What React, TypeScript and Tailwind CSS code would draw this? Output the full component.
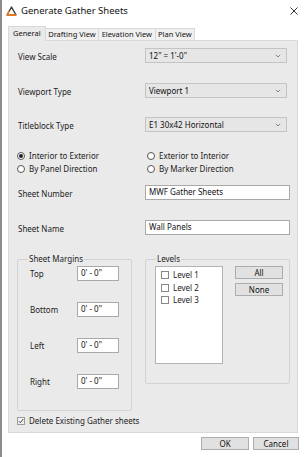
import React from "react";

const font = { fontFamily: '"Noto Sans", "Open Sans", sans-serif' };

function Chevron() {
  return (
    <svg width="6" height="4" viewBox="0 0 6 4" className="shrink-0">
      <path d="M0.8 0.8 L3 3 L5.2 0.8" fill="none" stroke="#7a7a7a" strokeWidth="0.9" />
    </svg>
  );
}

function Select({ value }: { value: string }) {
  return (
    <div className="w-[142px] h-[15px] border border-[#c4c4c4] bg-[#e6e6e6] flex items-center justify-between pl-[3px] pr-[5px] text-[8px] text-[#111]">
      <span className="leading-none">{value}</span>
      <Chevron />
    </div>
  );
}

function Input({ value, w }: { value: string; w: string }) {
  return (
    <div className={`${w} h-[15px] border border-[#a9a9a9] bg-white flex items-start pl-[3px] pt-[1px] text-[8px] leading-[10px] text-[#111]`}>
      {value}
    </div>
  );
}

function Radio({ checked, label }: { checked?: boolean; label: string }) {
  return (
    <div className="flex items-center gap-[4px] h-[13px]">
      <div className="w-[8px] h-[8px] rounded-full border border-[#555] bg-white flex items-center justify-center">
        {checked && <div className="w-[4px] h-[4px] rounded-full bg-[#222]" />}
      </div>
      <span className="text-[8px] text-[#222] leading-none">{label}</span>
    </div>
  );
}

function Btn({ label, w }: { label: string; w: string }) {
  return (
    <div className={`${w} h-[13px] border border-[#adadad] bg-[#e1e1e1] flex items-center justify-center text-[8px] text-[#111] leading-none`}>
      {label}
    </div>
  );
}

function MarginRow({ label, first }: { label: string; first?: boolean }) {
  return (
    <div className={`flex items-center h-[15px] ${first ? "" : "mt-[21px]"}`}>
      <span className="w-[50px] pl-[3px] text-[8px] text-[#222] leading-none">{label}</span>
      <Input value="0' - 0&quot;" w="w-[42px]" />
    </div>
  );
}

function LevelItem({ label }: { label: string }) {
  return (
    <div className="flex items-center gap-[4px] h-[12.5px]">
      <div className="w-[8px] h-[8px] border border-[#888] bg-white" />
      <span className="text-[8px] text-[#222] leading-none">{label}</span>
    </div>
  );
}

export default function App() {
  return (
    <div style={font} className="w-[305px] h-[457px] bg-white border-l-[2px] border-[#8c8c8c] flex flex-col overflow-hidden">
      {/* Title bar */}
      <div className="h-[20px] flex items-center pl-[4px] pr-[7px] pt-[1px]">
        <svg width="11" height="10" viewBox="0 0 11 10" className="shrink-0">
          <path d="M5.5 1 L1 9 L10 9 Z" fill="none" stroke="#3a3a3a" strokeWidth="1.4" strokeLinejoin="round" />
          <path d="M1 9 L10 9" stroke="#f07a1a" strokeWidth="1.8" />
          <path d="M1.2 8.6 L3.2 5" stroke="#f07a1a" strokeWidth="1.4" />
        </svg>
        <span className="ml-[4px] text-[9.5px] text-[#111] leading-none">Generate Gather Sheets</span>
        <div className="flex-1" />
        <svg width="8" height="8" viewBox="0 0 8 8">
          <path d="M0.5 0.5 L7.5 7.5 M7.5 0.5 L0.5 7.5" stroke="#333" strokeWidth="1" />
        </svg>
      </div>

      {/* Tabs */}
      <div className="mt-[6px] ml-[6px] flex items-end h-[14px] relative z-10">
        <div className="h-[15px] px-[4px] border border-[#d9d9d9] border-b-0 bg-[#eaeaea] flex items-center text-[7.5px] text-[#111] leading-none -mb-[1px]">
          General
        </div>
        <div className="h-[12px] px-[2.5px] border border-[#d9d9d9] border-b-0 border-l-0 bg-[#f0f0f0] flex items-center text-[7.5px] text-[#111] leading-none">
          Drafting View
        </div>
        <div className="h-[12px] px-[2.5px] border border-[#d9d9d9] border-b-0 border-l-0 bg-[#f0f0f0] flex items-center text-[7.5px] text-[#111] leading-none">
          Elevation View
        </div>
        <div className="h-[12px] px-[2.5px] border border-[#d9d9d9] border-b-0 border-l-0 bg-[#f0f0f0] flex items-center text-[7.5px] text-[#111] leading-none">
          Plan View
        </div>
      </div>

      {/* Panel */}
      <div className="ml-[6px] w-[290px] h-[393px] border border-[#d9d9d9] bg-[#eaeaea] pl-[8px] pt-[7px] flex flex-col">
        <div className="flex items-center h-[15px]">
          <span className="w-[128px] pl-[1px] pt-[2px] text-[8px] text-[#222] leading-none">View Scale</span>
          <Select value={'12" = 1\'-0"'} />
        </div>
        <div className="flex items-center h-[15px] mt-[20px]">
          <span className="w-[128px] pl-[1px] pt-[2px] text-[8px] text-[#222] leading-none">Viewport Type</span>
          <Select value="Viewport 1" />
        </div>
        <div className="flex items-center h-[15px] mt-[19px]">
          <span className="w-[128px] pl-[1px] pt-[2px] text-[8px] text-[#222] leading-none">Titleblock Type</span>
          <Select value="E1 30x42 Horizontal" />
        </div>

        <div className="mt-[17px] grid grid-cols-[130px_1fr]">
          <Radio checked label="Interior to Exterior" />
          <Radio label="Exterior to Interior" />
          <Radio label="By Panel Direction" />
          <Radio label="By Marker Direction" />
        </div>

        <div className="flex items-center h-[15px] mt-[10px]">
          <span className="w-[128px] pl-[1px] pt-[2px] text-[8px] text-[#222] leading-none">Sheet Number</span>
          <Input value="MWF Gather Sheets" w="w-[145px]" />
        </div>
        <div className="flex items-center h-[15px] mt-[20px]">
          <span className="w-[128px] pl-[1px] pt-[2px] text-[8px] text-[#222] leading-none">Sheet Name</span>
          <Input value="Wall Panels" w="w-[145px]" />
        </div>

        {/* Group boxes */}
        <div className="mt-[20px] flex items-start">
          <fieldset className="w-[115px] h-[156px] border border-[#d2d2d2] rounded-[2px] pl-[9px] pt-[3px]">
            <legend className="text-[8px] text-[#222] leading-none px-[1px] ml-[1px]">Sheet Margins</legend>
            <MarginRow label="Top" first />
            <MarginRow label="Bottom" />
            <MarginRow label="Left" />
            <MarginRow label="Right" />
          </fieldset>
          <fieldset className="ml-[13px] w-[145px] h-[129px] border border-[#d2d2d2] rounded-[2px] pl-[9px] pt-[3px] flex">
            <legend className="text-[8px] text-[#222] leading-none px-[1px] ml-[1px]">Levels</legend>
            <div className="flex items-start">
              <div className="w-[68px] h-[98px] border border-[#b4b4b4] bg-white pl-[5px] pt-[2px]">
                <LevelItem label="Level 1" />
                <LevelItem label="Level 2" />
                <LevelItem label="Level 3" />
              </div>
              <div className="ml-[12px] flex flex-col gap-[4px]">
                <Btn label="All" w="w-[48px]" />
                <Btn label="None" w="w-[48px]" />
              </div>
            </div>
          </fieldset>
        </div>

        <div className="mt-[5px] flex items-center gap-[4px] h-[10px]">
          <div className="w-[8px] h-[8px] border border-[#9a9a9a] bg-[#f2f2f2] flex items-center justify-center">
            <svg width="6" height="6" viewBox="0 0 6 6">
              <path d="M0.8 3.2 L2.3 4.8 L5.3 1" fill="none" stroke="#333" strokeWidth="0.9" />
            </svg>
          </div>
          <span className="text-[8px] text-[#222] leading-none">Delete Existing Gather sheets</span>
        </div>
      </div>

      {/* Buttons */}
      <div className="mt-[4px] flex justify-end gap-[4px] pr-[6px]">
        <Btn label="OK" w="w-[48px]" />
        <Btn label="Cancel" w="w-[46px]" />
      </div>
    </div>
  );
}
